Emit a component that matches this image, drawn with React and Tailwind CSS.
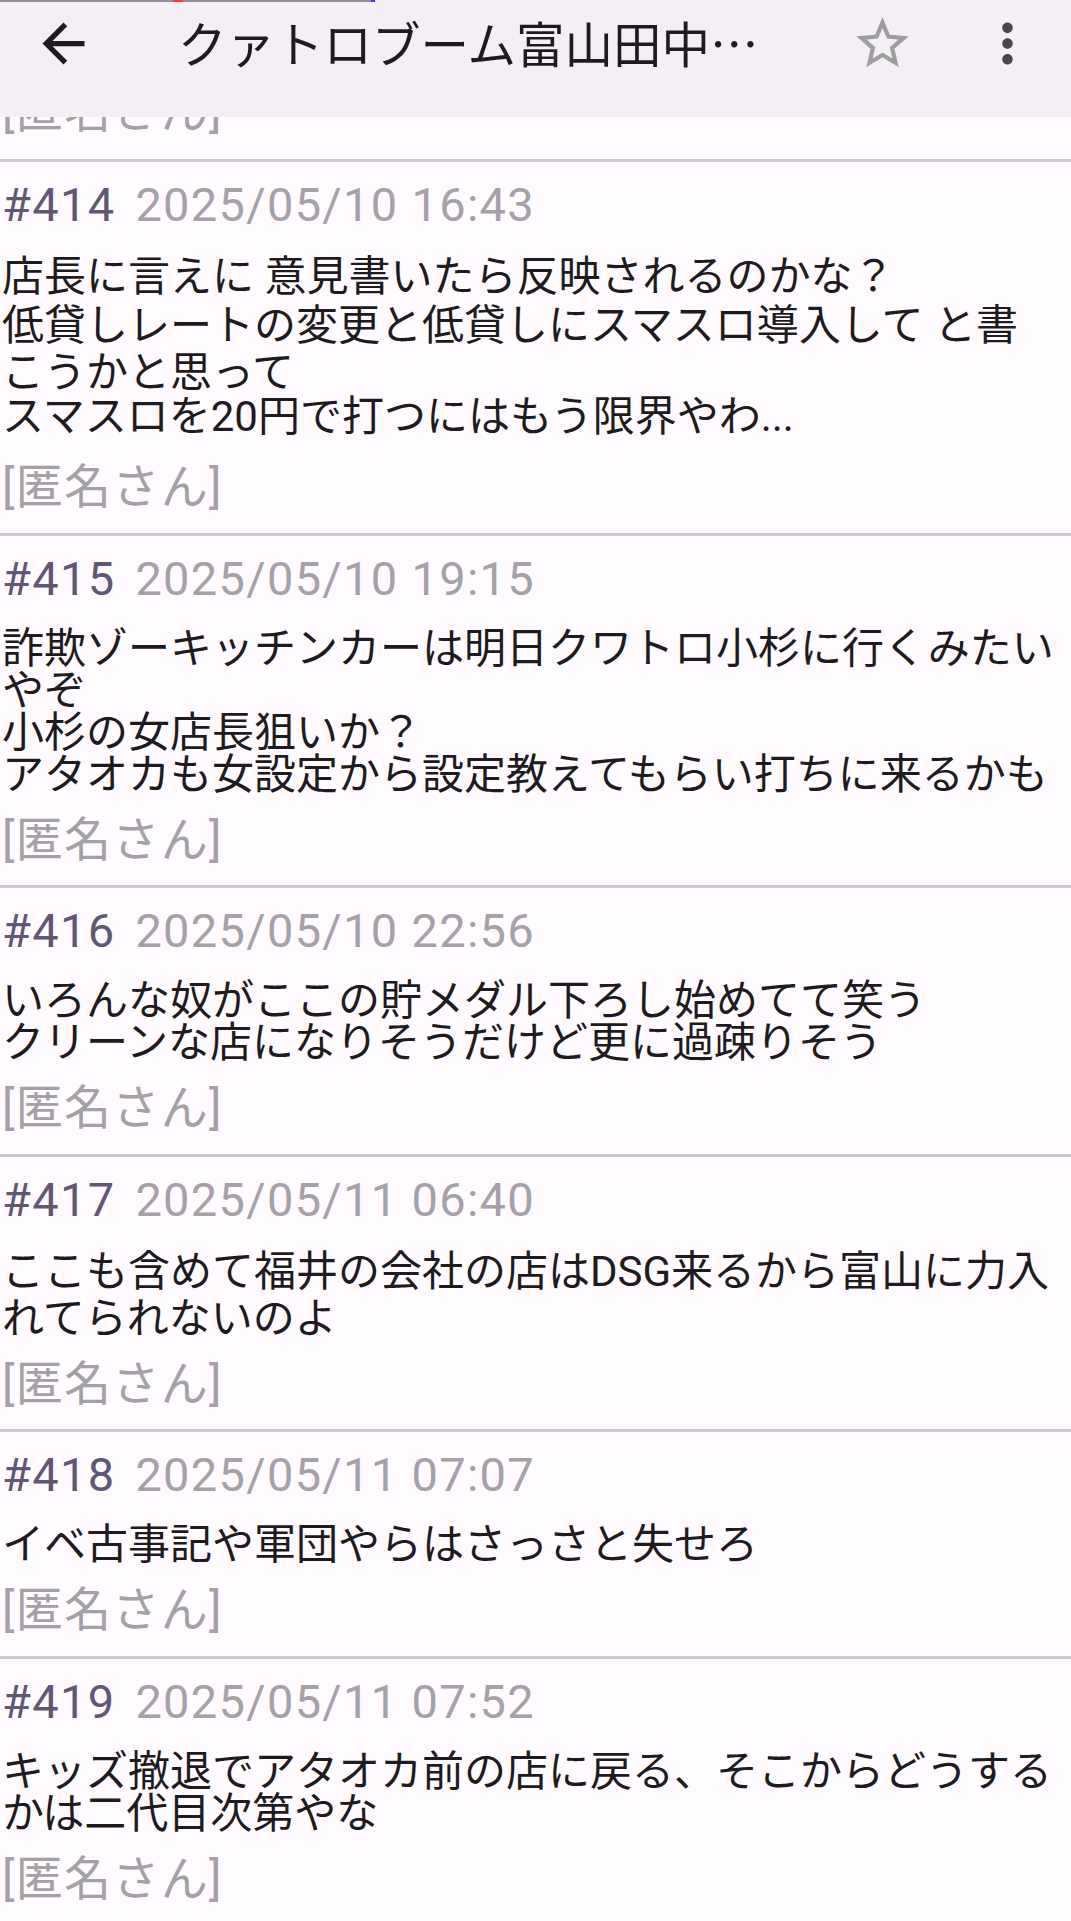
import React from "react";

const posts = [
  {
    no: "#414",
    date: "2025/05/10 16:43",
    lines: [
      "店長に言えに 意見書いたら反映されるのかな？",
      "低貸しレートの変更と低貸しにスマスロ導入して と書",
      "こうかと思って",
      "スマスロを20円で打つにはもう限界やわ...",
    ],
  },
  {
    no: "#415",
    date: "2025/05/10 19:15",
    lines: [
      "詐欺ゾーキッチンカーは明日クワトロ小杉に行くみたい",
      "やぞ",
      "小杉の女店長狙いか？",
      "アタオカも女設定から設定教えてもらい打ちに来るかも",
    ],
  },
  {
    no: "#416",
    date: "2025/05/10 22:56",
    lines: [
      "いろんな奴がここの貯メダル下ろし始めてて笑う",
      "クリーンな店になりそうだけど更に過疎りそう",
    ],
  },
  {
    no: "#417",
    date: "2025/05/11 06:40",
    lines: [
      "ここも含めて福井の会社の店はDSG来るから富山に力入",
      "れてられないのよ",
    ],
  },
  {
    no: "#418",
    date: "2025/05/11 07:07",
    lines: ["イベ古事記や軍団やらはさっさと失せろ"],
  },
  {
    no: "#419",
    date: "2025/05/11 07:52",
    lines: [
      "キッズ撤退でアタオカ前の店に戻る、そこからどうする",
      "かは二代目次第やな",
    ],
  },
];

const FONT = "font-[family-name:Roboto,'Noto_Sans_CJK_JP',sans-serif]";

function Line({ text }) {
  const latin = /[\x00-\x7F]/.test(text);
  return (
    <div
      className={
        latin
          ? "h-[49px] leading-[49px] whitespace-nowrap"
          : "h-[42px] leading-[45px] whitespace-nowrap"
      }
    >
      {text}
    </div>
  );
}

function Post({ post }) {
  return (
    <div className="flex flex-col">
      <div className="h-[3px] bg-[#cdc8d2]" />
      <div className="flex flex-col pl-[2px] pt-[15px] pb-[18.5px]">
        <div className="flex h-[55px] items-start gap-[20px] text-[47px] leading-[55px] tracking-[1.3px] whitespace-nowrap">
          <span className="text-[#5f5874]">{post.no}</span>
          <span className="text-[#a4a2a7]">{post.date}</span>
        </div>
        <div className="mt-[20px] flex flex-col text-[42px] text-[#1d1b20]">
          {post.lines.map((l, i) => (
            <Line key={i} text={l} />
          ))}
        </div>
        <div className="mt-[18px] h-[55px] text-[47px] leading-[55px] tracking-[1.3px] text-[#a3a1a5] whitespace-nowrap">
          [匿名さん]
        </div>
      </div>
    </div>
  );
}

export default function App() {
  return (
    <div className={`w-[1071px] h-[1921px] overflow-hidden bg-[#fffbff] ${FONT}`}>
      <header className="h-[117px] bg-[#f3eff5] flex flex-col">
        <div className="flex h-[2px] w-[375px]">
          <div className="w-[173px] bg-[#968f97]" />
          <div className="w-[10px] bg-[#ff3c3c]" />
          <div className="w-[188px] bg-[#968f97]" />
          <div className="w-[4px] bg-[#3c3cff]" />
        </div>
        <div className="flex items-start pl-[32px] pr-[32px] pt-[10px]">
          <svg viewBox="0 0 24 24" className="w-[63px] h-[63px] shrink-0" fill="#1d1b20">
            <path d="M20 11H7.83l5.59-5.59L12 4l-8 8 8 8 1.41-1.41L7.83 13H20v-2z" />
          </svg>
          <div className="ml-[83px] flex-1 min-w-0 h-[63px] leading-[61px] text-[48.5px] text-[#1d1b20] whitespace-nowrap overflow-hidden font-[family-name:'Noto_Sans_CJK_JP',sans-serif]">
            クァトロブーム富山田中…
          </div>
          <svg viewBox="0 0 24 24" className="w-[63px] h-[63px] shrink-0" fill="#9f9e9f">
            <path d="M22 9.24l-7.19-.62L12 2 9.19 8.63 2 9.24l5.46 4.73L5.82 21 12 17.27 18.18 21l-1.63-7.03L22 9.24zM12 15.4l-3.76 2.27 1-4.28-3.32-2.880 4.38-.38L12 6.1l1.71 4.04 4.38.38-3.32 2.88 1 4.28L12 15.4z" />
          </svg>
          <svg viewBox="0 0 24 24" className="ml-[62px] w-[63px] h-[63px] shrink-0" fill="#49454f">
            <path d="M12 8c1.1 0 2-.9 2-2s-.9-2-2-2-2 .9-2 2 .9 2 2 2zm0 2c-1.1 0-2 .9-2 2s.9 2 2 2 2-.9 2-2-.9-2-2-2zm0 6c-1.1 0-2 .9-2 2s.9 2 2 2 2-.9 2-2-.9-2-2-2z" />
          </svg>
        </div>
      </header>
      <div className="h-[42px] overflow-hidden flex flex-col justify-end pl-[2px]">
        <div className="shrink-0 h-[55px] text-[47px] leading-[55px] tracking-[1.3px] text-[#a3a1a5] whitespace-nowrap">
          [匿名さん]
        </div>
        <div className="shrink-0 h-[21px]" />
      </div>
      {posts.map((p) => (
        <Post key={p.no} post={p} />
      ))}
    </div>
  );
}
